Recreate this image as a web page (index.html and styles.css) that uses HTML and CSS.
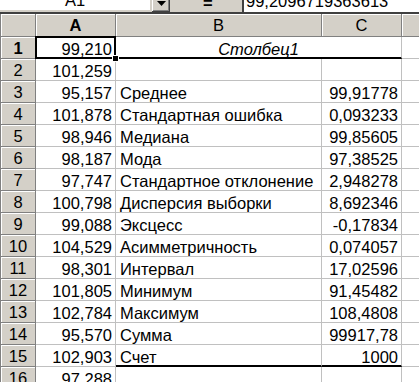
FILE: index.html
```html
<!DOCTYPE html>
<html lang="ru">
<head>
<meta charset="utf-8">
<link rel="stylesheet" href="styles.css">
</head>
<body>
<div class="app">
  <div class="toolbar">
    <div class="namebox">A1</div>
    <div class="dropbtn"><svg width="9" height="5" viewBox="0 0 9 5"><path d="M0 0H9L4.5 5Z" fill="#000"/></svg></div>
    <div class="spacer"></div>
    <div class="eqbtn">=</div>
    <div class="formula">99,2096719363613</div>
  </div>
  <div class="sheet">
    <div class="corner"></div><div class="ch sel">A</div><div class="ch">B</div><div class="ch">C</div><div class="ch last"></div>

    <div class="rh sel">1</div><div class="c n active">99,210</div><div class="c title">Столбец1</div><div class="c last"></div>
    <div class="rh">2</div><div class="c n">101,259</div><div class="c"></div><div class="c"></div><div class="c last"></div>
    <div class="rh">3</div><div class="c n">95,157</div><div class="c">Среднее</div><div class="c n">99,91778</div><div class="c last"></div>
    <div class="rh">4</div><div class="c n">101,878</div><div class="c">Стандартная ошибка</div><div class="c n">0,093233</div><div class="c last"></div>
    <div class="rh">5</div><div class="c n">98,946</div><div class="c">Медиана</div><div class="c n">99,85605</div><div class="c last"></div>
    <div class="rh">6</div><div class="c n">98,187</div><div class="c">Мода</div><div class="c n">97,38525</div><div class="c last"></div>
    <div class="rh">7</div><div class="c n">97,747</div><div class="c">Стандартное отклонение</div><div class="c n">2,948278</div><div class="c last"></div>
    <div class="rh">8</div><div class="c n">100,798</div><div class="c">Дисперсия выборки</div><div class="c n">8,692346</div><div class="c last"></div>
    <div class="rh">9</div><div class="c n">99,088</div><div class="c">Эксцесс</div><div class="c n">-0,17834</div><div class="c last"></div>
    <div class="rh">10</div><div class="c n">104,529</div><div class="c">Асимметричность</div><div class="c n">0,074057</div><div class="c last"></div>
    <div class="rh">11</div><div class="c n">98,301</div><div class="c">Интервал</div><div class="c n">17,02596</div><div class="c last"></div>
    <div class="rh">12</div><div class="c n">101,805</div><div class="c">Минимум</div><div class="c n">91,45482</div><div class="c last"></div>
    <div class="rh">13</div><div class="c n">102,784</div><div class="c">Максимум</div><div class="c n">108,4808</div><div class="c last"></div>
    <div class="rh">14</div><div class="c n">95,570</div><div class="c">Сумма</div><div class="c n">99917,78</div><div class="c last"></div>
    <div class="rh">15</div><div class="c n">102,903</div><div class="c bb">Счет</div><div class="c n bb">1000</div><div class="c last"></div>
    <div class="rh">16</div><div class="c n">97,288</div><div class="c"></div><div class="c"></div><div class="c last"></div>
  </div>
</div>
</body>
</html>
```
FILE: styles.css
```css
html, body {
  margin: 0;
  padding: 0;
  background: #ffffff;
  overflow: hidden;
}
.app {
  width: 419px;
  height: 382px;
  overflow: hidden;
  font-family: "Liberation Sans", Arial, sans-serif;
  font-size: 16.5px;
  color: #000;
}
.toolbar {
  display: flex;
  align-items: flex-end;
  height: 12px;
  overflow: hidden;
  background: #d4d0c8;
  border-bottom: 2px solid #404040;
}
.namebox {
  flex: 0 0 150px;
  height: 22px;
  margin-bottom: 2px;
  background: #fff;
  display: flex;
  align-items: flex-end;
  justify-content: center;
  line-height: 16px;
  padding-bottom: 2px;
  box-sizing: border-box;
}
.dropbtn {
  flex: 0 0 18px;
  height: 22px;
  margin-left: 2px;
  box-sizing: border-box;
  background: #d4d0c8;
  display: flex;
  align-items: flex-end;
  justify-content: center;
  padding-bottom: 6px;
  box-shadow: inset -1px -1px 0 #404040, inset 1px 1px 0 #fff, inset -2px -2px 0 #808080;
}
.dropbtn svg { display: block; }
.spacer { flex: 0 0 30px; }
.eqbtn {
  flex: 0 0 42px;
  height: 22px;
  box-sizing: border-box;
  font-weight: bold;
  line-height: 16px;
  padding: 0 0 1px 3px;
  display: flex;
  align-items: flex-end;
}
.formula {
  flex: 1;
  height: 22px;
  box-sizing: border-box;
  background: #fff;
  border-left: 2px solid #404040;
  line-height: 16px;
  padding: 0 0 3px 2px;
  display: flex;
  align-items: flex-end;
  white-space: nowrap;
}
.sheet {
  display: grid;
  grid-template-columns: 36px 80px 206px 80px 1fr;
  grid-template-rows: 23px repeat(16, 22px);
}
.corner, .ch, .rh {
  box-sizing: border-box;
  background: #d4d0c8;
  border-right: 1px solid #808080;
  border-bottom: 1px solid #808080;
  box-shadow: inset 1px 1px 0 #fff;
  display: flex;
  align-items: center;
  justify-content: center;
  line-height: 16px;
}
.corner, .rh { border-left: 1px solid #808080; }
.ch.last { border-right: none; }
.sel { font-weight: bold; }
.c {
  box-sizing: border-box;
  border-right: 1px solid #c0c0c0;
  border-bottom: 1px solid #c0c0c0;
  display: flex;
  align-items: flex-end;
  line-height: 16px;
  padding: 0 4px 1px 4px;
  white-space: nowrap;
  overflow: visible;
}
.c.n { justify-content: flex-end; padding-right: 3px; }
.c.last { border-right: none; }
.c.title {
  grid-column: span 2;
  justify-content: center;
  font-style: italic;
  border-bottom: 2px solid #000;
  padding-bottom: 0;
}
.c.bb { border-bottom: 2px solid #000; padding-bottom: 0; }
.c.active { position: relative; }
.c.active::after {
  content: "";
  position: absolute;
  left: -1px;
  top: -1px;
  right: -1px;
  bottom: -1px;
  border: 2px solid #000;
}
.c.active::before {
  content: "";
  position: absolute;
  right: -3px;
  bottom: -3px;
  width: 5px;
  height: 5px;
  background: #000;
  box-shadow: 0 0 0 1px #fff;
  z-index: 1;
}
```
